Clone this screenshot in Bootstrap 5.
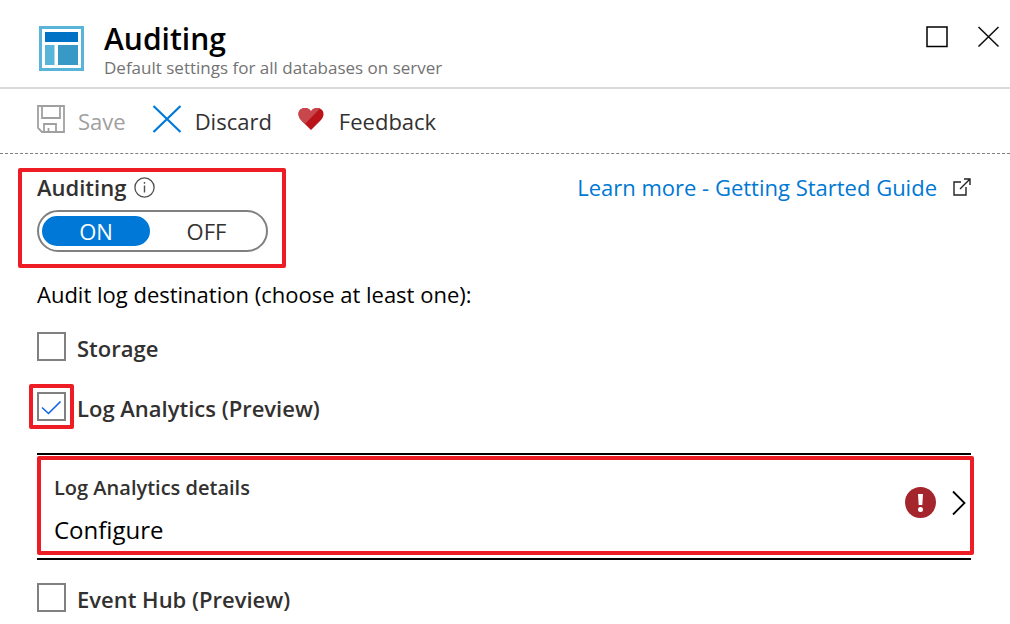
<!DOCTYPE html>
<html lang="en">
<head>
<meta charset="utf-8">
<meta name="viewport" content="width=device-width, initial-scale=1">
<title>Auditing</title>
<link href="https://cdn.jsdelivr.net/npm/bootstrap@5.3.0/dist/css/bootstrap.min.css" rel="stylesheet">
<style>
  body { font-family: "Open Sans", "Noto Sans", sans-serif; font-size: 22px; line-height: 32px; color: #323130; background: #fff; overflow-x: hidden; }
  svg { display: block; flex: none; }
  .plain-btn { background: none; border: 0; padding: 0; color: inherit; }
  .blade-head { padding: 22px 10px 7px 39px; border-bottom: 2px solid #d9d9d9; }
  .blade-title { font-size: 30px; line-height: 34px; font-weight: 600; color: #000; margin: 0; }
  .blade-sub { font-size: 17px; line-height: 24px; color: #737373; margin: 0; }
  .toolbar { padding: 16px 37px; gap: 26px; border-bottom: 1px dashed #808080; }
  .toolbar .plain-btn { gap: 13px; }
  .toolbar .plain-btn:disabled { color: #a0a0a0; }
  .blade-body { padding: 17px 39px 8px 37px; }
  .strong-label { font-weight: 600; }
  .callout { position: relative; }
  .callout::after { content: ""; position: absolute; border: 4px solid #ee1c25; border-radius: 2px; pointer-events: none; }
  .callout-field::after { inset: -3px -18px -16px -19px; }
  .callout-check::after { inset: -8px; }
  .callout-row::after { inset: 1px -3px 3px 0; }
  .toggle { width: 231px; height: 42px; border: 2px solid #808080; border-radius: 21px; padding: 4px 3px; margin-top: 7px; }
  .toggle label { flex: 1 1 0; line-height: 30px; text-align: center; border-radius: 15px; cursor: pointer; }
  .toggle .btn-check:checked + label { flex: none; width: 108px; background: #0078d7; color: #fff; }
  .guide { color: #0078d4; text-decoration: none; }
  .destination { margin: 26px 0 22px; color: #000; }
  .tick { appearance: none; display: block; width: 29px; height: 29px; margin: 0; border: 2px solid #808080; background: #fff center / 25px 25px no-repeat; }
  .tick:checked { background-image: url("data:image/svg+xml,%3Csvg xmlns='http://www.w3.org/2000/svg' viewBox='0 0 25 25'%3E%3Cpath d='M3 13.500l6.500 6L21.500 7.500' fill='none' stroke='%230f62e6' stroke-width='1.600'/%3E%3C/svg%3E"); }
  .option { gap: 11px; height: 29px; }
  .option label { white-space: nowrap; }
  .option + .option { margin-top: 31px; }
  .details { width: 100%; text-align: left; border: solid #000; border-width: 2px 0; padding: 6px 5px 0 17px; height: 107px; margin: 32px 0 23px; background: #fff; }
  .details-name { display: block; font-size: 20px; line-height: 32px; font-weight: 600; color: #323130; }
  .details-value { display: block; font-size: 24px; line-height: 34px; color: #000; margin-top: 9px; }
  .details svg { margin-bottom: 14px; }
</style>
</head>
<body>
<header class="blade-head d-flex align-items-start">
  <svg class="mt-1" width="45" height="45" viewBox="0 0 45 45"><path fill="#59b4d9" d="M0 0h45v45H0z"/><path fill="#fff" d="M3 3h39v39H3z"/><path fill="#0072c6" d="M6 6h33v10H6z"/><path fill="#59b4d9" d="M6 19h9.500v20H6z"/><path fill="#3999c6" d="M19 19h20v20H19z"/></svg>
  <div class="flex-grow-1 ms-3 ps-1">
    <h1 class="blade-title">Auditing</h1>
    <p class="blade-sub">Default settings for all databases on server</p>
  </div>
  <div class="d-flex mt-1">
    <button class="plain-btn" type="button" aria-label="Maximize"><svg width="22" height="22"><path d="M1 1h20v19.500H1z" fill="none" stroke="#000" stroke-width="1.500"/></svg></button>
    <button class="plain-btn ms-4 ps-1" type="button" aria-label="Close"><svg width="24" height="22"><path d="M2.500 1l20 19.500M22.500 1l-20 19.500" stroke="#111" stroke-width="1.600"/></svg></button>
  </div>
</header>
<nav class="toolbar d-flex" aria-label="Commands">
  <button class="plain-btn d-flex align-items-center" type="button" disabled><svg class="mb-1" width="28" height="28" viewBox="0 0 28 28" fill="none" stroke="#a0a0a0" stroke-width="1.800"><path d="M1 1h26v26H5l-4-4zM5 1v12h18V1M7 27v-8h12v8M11.500 27v-4"/></svg>Save</button>
  <button class="plain-btn d-flex align-items-center" type="button"><svg class="mb-1" width="30" height="28" viewBox="0 0 30 28"><path d="M1.500 1l27 26M28.500 1l-27 26" stroke="#0078d7" stroke-width="2.200"/></svg>Discard</button>
  <button class="plain-btn d-flex align-items-center" type="button"><svg class="mb-1" width="28" height="24" viewBox="0 0 28 24"><path fill="#ba141a" d="M13 23L3 13C-2 7 1 1 7 1c3 0 5 1 6 4 1-3 3-4 6-4 6 0 9 6 4 12z"/><path fill="#c8474c" d="M7 17L3 13C-2 7 1 1 7 1c3 0 5 1 6 4 1-3 3-4 6-4l3 .6z"/></svg>Feedback</button>
</nav>
<main class="blade-body">
  <div class="d-flex justify-content-between align-items-start">
    <div class="callout callout-field">
      <div class="d-flex align-items-center strong-label">Auditing
        <svg class="ms-2" width="21" height="21" viewBox="0 0 21 21"><circle cx="10.500" cy="10.500" r="9.600" fill="none" stroke="#505050" stroke-width="1.300"/><path d="M10.500 8.500v7M10.500 5v1.800" stroke="#505050" stroke-width="1.400"/></svg>
      </div>
      <div class="toggle d-flex" role="radiogroup" aria-label="Auditing">
        <input class="btn-check" type="radio" name="audit" id="on" checked><label for="on">ON</label>
        <input class="btn-check" type="radio" name="audit" id="off"><label for="off">OFF</label>
      </div>
    </div>
    <a class="guide d-flex align-items-center" href="#guide">Learn more - Getting Started Guide
      <svg class="ms-3" width="18" height="18" viewBox="0 0 18 18" fill="none" stroke="#222" stroke-width="1.400"><path d="M8 4H1v13h12V9M7 11L17 1M11 1h6v6"/></svg></a>
  </div>
  <p class="destination">Audit log destination (choose at least one):</p>
  <div class="option d-flex">
    <input class="tick" type="checkbox" id="storage"><label class="strong-label" for="storage">Storage</label>
  </div>
  <div class="option d-flex">
    <span class="callout callout-check"><input class="tick" type="checkbox" id="analytics" checked></span><label class="strong-label" for="analytics">Log Analytics (Preview)</label>
  </div>
  <button class="details callout callout-row d-flex align-items-center" type="button">
    <span class="flex-grow-1"><span class="details-name">Log Analytics details</span><span class="details-value">Configure</span></span>
    <svg class="me-3" width="31" height="31" viewBox="0 0 31 31"><circle cx="15.500" cy="15.500" r="15.500" fill="#a4262c"/><path fill="#fff" d="M13 7h5l-.7 11h-3.600z"/><circle cx="15.500" cy="22.500" r="2.500" fill="#fff"/></svg>
    <svg width="14" height="26" viewBox="0 0 14 26"><path d="M1 1.500L12.500 13 1 24.500" fill="none" stroke="#000" stroke-width="1.800"/></svg>
  </button>
  <div class="option d-flex">
    <input class="tick" type="checkbox" id="hub"><label class="strong-label" for="hub">Event Hub (Preview)</label>
  </div>
</main>
</body>
</html>
